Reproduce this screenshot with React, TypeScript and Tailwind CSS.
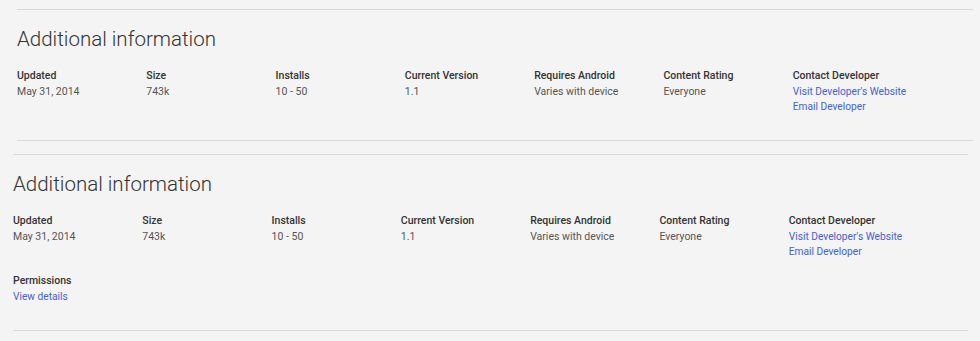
type Item = {
  label: string
  values?: string[]
  links?: string[]
}

const items: Item[] = [
  { label: "Updated", values: ["May 31, 2014"] },
  { label: "Size", values: ["743k"] },
  { label: "Installs", values: ["10 - 50"] },
  { label: "Current Version", values: ["1.1"] },
  { label: "Requires Android", values: ["Varies with device"] },
  { label: "Content Rating", values: ["Everyone"] },
  {
    label: "Contact Developer",
    links: ["Visit Developer's Website", "Email Developer"],
  },
]

const MetaItem = ({ item }: { item: Item }) => (
  <div>
    <div className="text-[10.5px] leading-[16px] font-medium text-[#333333]">
      {item.label}
    </div>
    {item.values?.map((v) => (
      <div key={v} className="text-[10.5px] leading-[15px] text-[#555555]">
        {v}
      </div>
    ))}
    {item.links?.map((l) => (
      <a
        key={l}
        href="#"
        className="block text-[10.2px] leading-[15px] text-[#4562cf]"
      >
        {l}
      </a>
    ))}
  </div>
)

type SectionProps = {
  className: string
  showPermissions?: boolean
}

const InfoSection = ({ className, showPermissions }: SectionProps) => (
  <section
    className={
      "border-t border-b border-[#d9d9d9] pt-[14px] pb-[26px] " + className
    }
  >
    <h2 className="text-[20.5px] leading-[30px] font-light text-[#333333]">
      Additional information
    </h2>
    <div className="mt-[14px] grid w-[905px] grid-cols-7 gap-y-[14px]">
      {items.map((item) => (
        <MetaItem key={item.label} item={item} />
      ))}
      {showPermissions && (
        <MetaItem item={{ label: "Permissions", links: ["View details"] }} />
      )}
    </div>
  </section>
)

export default function App() {
  return (
    <div className="min-h-screen bg-[#f4f4f4] pt-[9px] font-['Roboto','Liberation_Sans',sans-serif]">
      <InfoSection className="ml-[17px] w-[956px]" />
      <InfoSection className="mt-[13px] ml-[13px] w-[955px]" showPermissions />
    </div>
  )
}
